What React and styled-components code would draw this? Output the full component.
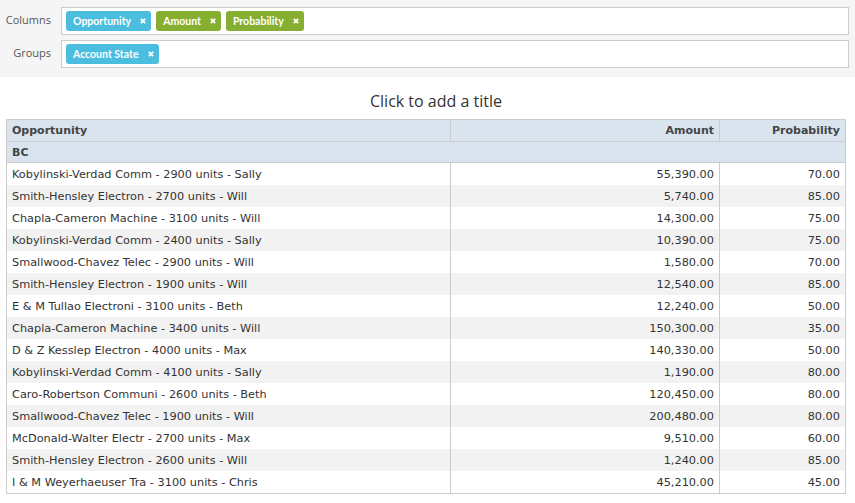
import styled, { createGlobalStyle } from "styled-components";

const GlobalStyle = createGlobalStyle`
  body {
    margin: 0;
    background: #fff;
    font-family: "Open Sans", "Liberation Sans", sans-serif;
  }
`;

const columns = [
  { label: "Opportunity", tone: "blue" },
  { label: "Amount", tone: "green" },
  { label: "Probability", tone: "green" },
];

const groups = [{ label: "Account State", tone: "blue" }];

const rows = [
  ["Kobylinski-Verdad Comm - 2900 units - Sally", "55,390.00", "70.00"],
  ["Smith-Hensley Electron - 2700 units - Will", "5,740.00", "85.00"],
  ["Chapla-Cameron Machine - 3100 units - Will", "14,300.00", "75.00"],
  ["Kobylinski-Verdad Comm - 2400 units - Sally", "10,390.00", "75.00"],
  ["Smallwood-Chavez Telec - 2900 units - Will", "1,580.00", "70.00"],
  ["Smith-Hensley Electron - 1900 units - Will", "12,540.00", "85.00"],
  ["E & M Tullao Electroni - 3100 units - Beth", "12,240.00", "50.00"],
  ["Chapla-Cameron Machine - 3400 units - Will", "150,300.00", "35.00"],
  ["D & Z Kesslep Electron - 4000 units - Max", "140,330.00", "50.00"],
  ["Kobylinski-Verdad Comm - 4100 units - Sally", "1,190.00", "80.00"],
  ["Caro-Robertson Communi - 2600 units - Beth", "120,450.00", "80.00"],
  ["Smallwood-Chavez Telec - 1900 units - Will", "200,480.00", "80.00"],
  ["McDonald-Walter Electr - 2700 units - Max", "9,510.00", "60.00"],
  ["Smith-Hensley Electron - 2600 units - Will", "1,240.00", "85.00"],
  ["I & M Weyerhaeuser Tra - 3100 units - Chris", "45,210.00", "45.00"],
];

const RemoveIcon = () => (
  <RemoveMark viewBox="0 0 6 6" aria-label="remove">
    <path d="M0.8 0.8 L5.2 5.2 M5.2 0.8 L0.8 5.2" />
  </RemoveMark>
);

export default function App() {
  return (
    <>
      <GlobalStyle />
      <Page>
        <FieldPanel>
          <FieldRow>
            <FieldLabel>Columns</FieldLabel>
            <DropBox>
              {columns.map((c) => (
                <Chip key={c.label} $tone={c.tone}>
                  {c.label}
                  <RemoveIcon />
                </Chip>
              ))}
            </DropBox>
          </FieldRow>
          <FieldRow>
            <FieldLabel>Groups</FieldLabel>
            <DropBox>
              {groups.map((c) => (
                <Chip key={c.label} $tone={c.tone}>
                  {c.label}
                  <RemoveIcon />
                </Chip>
              ))}
            </DropBox>
          </FieldRow>
        </FieldPanel>

        <Report>
          <Title>Click to add a title</Title>
          <Grid>
            <colgroup>
              <col style={{ width: 444 }} />
              <col style={{ width: 269 }} />
              <col style={{ width: 126 }} />
            </colgroup>
            <thead>
              <tr>
                <HeadCell>Opportunity</HeadCell>
                <HeadCell $right>Amount</HeadCell>
                <HeadCell $right>Probability</HeadCell>
              </tr>
            </thead>
            <tbody>
              <tr>
                <GroupCell colSpan={3}>BC</GroupCell>
              </tr>
              {rows.map((r, i) => (
                <Row key={i} $odd={i % 2 === 1}>
                  <Cell>{r[0]}</Cell>
                  <Cell $right>{r[1]}</Cell>
                  <Cell $right>{r[2]}</Cell>
                </Row>
              ))}
            </tbody>
          </Grid>
        </Report>
      </Page>
    </>
  );
}

const Page = styled.div`
  width: 855px;
  min-height: 503px;
`;

const FieldPanel = styled.div`
  background: #f5f5f5;
  padding: 7px 6px 9px 0;
  display: flex;
  flex-direction: column;
  gap: 5px;
`;

const FieldRow = styled.div`
  display: flex;
  align-items: center;
`;

const FieldLabel = styled.div`
  width: 51px;
  margin-right: 10px;
  text-align: right;
  font-size: 11px;
  color: #555;
  padding-bottom: 3px;
`;

const DropBox = styled.div`
  flex: 1;
  height: 28px;
  box-sizing: border-box;
  border: 1px solid #ccc;
  background: #fff;
  padding: 1px 4px 2px;
  display: flex;
  align-items: center;
  gap: 5px;
`;

const Chip = styled.span`
  display: inline-flex;
  align-items: center;
  height: 20px;
  padding: 0 5px 0 7px;
  border-radius: 3px;
  background: ${(p) => (p.$tone === "green" ? "#86ae30" : "#4bbddf")};
  color: #fff;
  font-family: Lato, "Open Sans", sans-serif;
  font-size: 10.5px;
  font-weight: 700;
  white-space: nowrap;
`;

const RemoveMark = styled.svg`
  width: 6px;
  height: 6px;
  margin-left: 9px;
  margin-top: 1px;
  stroke: #fff;
  stroke-width: 1.8;
  fill: none;
`;

const Report = styled.div`
  padding: 14px 9px 0 6px;
`;

const Title = styled.div`
  text-align: center;
  padding-left: 20px;
  font-size: 16px;
  color: #333;
  line-height: 22px;
  margin-bottom: 7px;
  margin-top: -1px;
`;

const Grid = styled.table`
  width: 840px;
  border-collapse: collapse;
  table-layout: fixed;
  border: 1px solid #ccc;
  font-family: "DejaVu Sans", Verdana, sans-serif;
  font-size: 11px;
  color: #333;
`;

const HeadCell = styled.th`
  height: 21px;
  padding: 0 5px;
  background: #d9e4ef;
  border: 1px solid #ccc;
  text-align: ${(p) => (p.$right ? "right" : "left")};
  font-weight: 700;
  color: #444;
`;

const GroupCell = styled.td`
  height: 20px;
  padding: 0 5px;
  background: #d9e4ef;
  border: 1px solid #ccc;
  font-weight: 700;
  color: #444;
`;

const Row = styled.tr`
  background: ${(p) => (p.$odd ? "#f2f2f2" : "#fff")};
`;

const Cell = styled.td`
  height: 22px;
  padding: 0 5px;
  border-left: 1px solid #ccc;
  text-align: ${(p) => (p.$right ? "right" : "left")};
  white-space: nowrap;
  font-size: 11.3px;
`;
